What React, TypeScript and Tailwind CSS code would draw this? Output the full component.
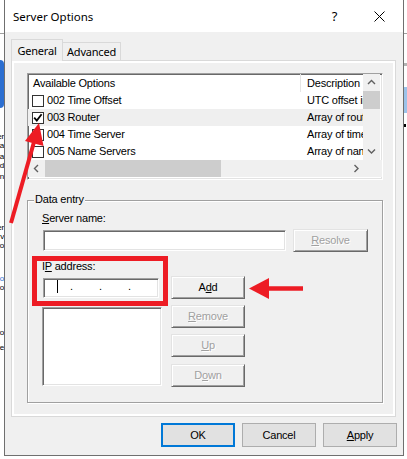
import React from "react";

const sunken =
  "border border-t-[#a0a0a0] border-l-[#a0a0a0] border-b-white border-r-white shadow-[inset_1px_1px_0_#696969,inset_-1px_-1px_0_#e3e3e3]";
const raised =
  "border border-t-[#e3e3e3] border-l-[#e3e3e3] border-b-[#696969] border-r-[#696969] shadow-[inset_1px_1px_0_#ffffff,inset_-1px_-1px_0_#a0a0a0] bg-[#f0f0f0]";

function Chevron({ dir }: { dir: "up" | "down" | "left" | "right" }) {
  const d =
    dir === "up"
      ? "M1 5 L4.5 1.5 L8 5"
      : dir === "down"
      ? "M1 1.5 L4.5 5 L8 1.5"
      : dir === "left"
      ? "M5 1 L1.5 4.5 L5 8"
      : "M1.5 1 L5 4.5 L1.5 8";
  const horiz = dir === "up" || dir === "down";
  return (
    <svg width={horiz ? 9 : 7} height={horiz ? 7 : 9} viewBox={horiz ? "0 0 9 7" : "0 0 7 9"}>
      <path d={d} stroke="#606060" strokeWidth="1.4" fill="none" />
    </svg>
  );
}

function Check({ checked }: { checked?: boolean }) {
  return (
    <div className="w-[12px] h-[12px] border border-[#333333] bg-white shrink-0 flex items-center justify-center">
      {checked && (
        <svg width="10" height="10" viewBox="0 0 10 10">
          <path d="M1.2 4.6 L3.8 7.6 L8.6 1.2" stroke="#000" strokeWidth="1.8" fill="none" />
        </svg>
      )}
    </div>
  );
}

const rows = [
  { name: "002 Time Offset", desc: "UTC offset in seconds", checked: false, hi: false },
  { name: "003 Router", desc: "Array of router addresses", checked: true, hi: true },
  { name: "004 Time Server", desc: "Array of time server addresses", checked: false, hi: false },
  { name: "005 Name Servers", desc: "Array of name servers", checked: false, hi: false },
];

function ClassicButton({ children, disabled, w = "w-[74px]", extra = "" }: { children: React.ReactNode; disabled?: boolean; w?: string; extra?: string }) {
  return (
    <div
      className={`${w} h-[23px] ${raised} flex items-center justify-center ${
        disabled ? "text-[#a0a0a0] [text-shadow:1px_1px_0_#ffffff]" : "text-black"
      } ${extra}`}
    >
      {children}
    </div>
  );
}

function StripLine({ t, c = "text-black", mt = "" }: { t: string; c?: string; mt?: string }) {
  return (
    <div className={`h-[9px] shrink-0 ${mt} flex justify-end whitespace-nowrap text-[8px] leading-[9px] ${c}`}>
      <span>{t}</span>
    </div>
  );
}

export default function App() {
  return (
    <div className="w-[407px] h-[459px] bg-white flex overflow-hidden relative font-['Liberation_Sans',Arial,sans-serif] text-[11px] leading-[13px] text-black tracking-[-0.2px]">
      {/* background window, left edge */}
      <div className="w-[4px] h-full shrink-0 flex flex-col overflow-hidden">
        <div className="h-[33px] shrink-0" />
        <div className="h-px bg-[#a0a0a0] shrink-0" />
        <div className="h-[26px] shrink-0" />
        <div className="h-[48px] shrink-0 bg-[#2c6fd1] rounded-r-[4px]" />
        <StripLine t="Server" mt="mt-[24px]" />
        <StripLine t="Data" />
        <StripLine t="Replica" mt="mt-[2px]" />
        <StripLine t="Add" />
        <StripLine t="Domain" mt="mt-[2px]" />
        <StripLine t="Server" mt="mt-[42px]" />
        <StripLine t="Serv" />
        <StripLine t="Policyo" />
        <StripLine t="o" c="text-[#2c6fd1]" mt="mt-[24px]" />
        <StripLine t="o" />
        <StripLine t="Policyo" mt="mt-[36px]" />
        <StripLine t="Store" mt="mt-[6px]" />
      </div>

      {/* dialog */}
      <div className="w-[400px] h-[456px] shrink-0 border-x border-b border-[#6f6f6f] flex flex-col">
        {/* title bar */}
        <div className="h-[32px] shrink-0 bg-white flex items-center pl-[8px]">
          <span className="font-['Noto_Sans',sans-serif] text-[11.5px] tracking-normal">Server Options</span>
          <div className="flex-1" />
          <div className="w-[45px] flex justify-center font-['Noto_Sans',sans-serif] text-[13px] tracking-normal">?</div>
          <div className="w-[45px] mr-[1px] flex justify-center">
            <svg width="11" height="11" viewBox="0 0 11 11">
              <path d="M0.5 0.5 L10.5 10.5 M10.5 0.5 L0.5 10.5" stroke="#000" strokeWidth="1" />
            </svg>
          </div>
        </div>

        {/* body */}
        <div className="flex-1 bg-[#f0f0f0] flex flex-col pl-[6px] pr-[6px]">
          {/* tabs */}
          <div className="mt-[7px] h-[21px] shrink-0 flex items-start relative z-10 font-['Noto_Sans',sans-serif] text-[11px] tracking-[-0.2px]">
            <div className="w-[52px] h-[22px] bg-[#f0f0f0] border-t border-l border-r border-[#d9d9d9] flex items-center justify-center pb-[1px]">
              General
            </div>
            <div className="w-[58px] h-[18px] mt-[3px] bg-[#f0f0f0] border-t border-r border-[#d9d9d9] flex items-center justify-center">
              Advanced
            </div>
          </div>

          {/* tab panel */}
          <div className="w-[385px] h-[357px] shrink-0 border border-[#d9d9d9] bg-white p-[2px]">
            <div className="w-full h-full bg-[#f0f0f0] pl-[13px] pt-[10px] flex flex-col">
              {/* list view */}
              <div className={`w-[356px] h-[107px] shrink-0 ${sunken} bg-white flex flex-col overflow-hidden`}>
                <div className="h-[86px] flex">
                  <div className="w-[335px] flex flex-col">
                    <div className="h-[18px] flex items-center">
                      <div className="w-[272px] pl-[5px]">Available Options</div>
                      <div className="flex-1 h-full border-l border-[#e5e5e5] pl-[6px] flex items-center whitespace-nowrap overflow-hidden">
                        Description
                      </div>
                    </div>
                    {rows.map((r) => (
                      <div key={r.name} className={`h-[17px] flex items-center ${r.hi ? "bg-[#efefef]" : ""}`}>
                        <div className="w-[273px] pl-[4px] flex items-center">
                          <Check checked={r.checked} />
                          <span className="ml-[3px] whitespace-nowrap">{r.name}</span>
                        </div>
                        <div className="flex-1 pl-[6px] whitespace-nowrap overflow-hidden">{r.desc}</div>
                      </div>
                    ))}
                  </div>
                  {/* vertical scrollbar */}
                  <div className="w-[17px] bg-[#f0f0f0] flex flex-col">
                    <div className="h-[17px] flex items-center justify-center">
                      <Chevron dir="up" />
                    </div>
                    <div className="h-[18px] bg-[#cdcdcd]" />
                    <div className="flex-1" />
                    <div className="h-[17px] flex items-center justify-center">
                      <Chevron dir="down" />
                    </div>
                  </div>
                </div>
                {/* horizontal scrollbar */}
                <div className="h-[17px] flex bg-[#f0f0f0]">
                  <div className="w-[17px] flex items-center justify-center">
                    <Chevron dir="left" />
                  </div>
                  <div className="w-[176px] bg-[#cdcdcd]" />
                  <div className="flex-1" />
                  <div className="w-[17px] flex items-center justify-center">
                    <Chevron dir="right" />
                  </div>
                  <div className="w-[17px] bg-[#f0f0f0]" />
                </div>
              </div>

              {/* group box */}
              <div className="mt-[20px] w-[356px] h-[203px] shrink-0 relative border border-[#a0a0a0] shadow-[inset_1px_1px_0_#ffffff,1px_1px_0_#ffffff] pl-[14px] pt-[11px] flex flex-col">
                <div className="absolute left-[6px] top-[-8px] px-[1px] bg-[#f0f0f0]">Data entry</div>
                <div>
                  <span className="underline underline-offset-[1px]">S</span>erver name:
                </div>
                <div className="mt-[4px] h-[23px] flex items-center">
                  <div className={`ml-[1px] w-[243px] h-[21px] ${sunken} bg-white`} />
                  <ClassicButton disabled w="w-[75px]" extra="ml-[7px]">
                    <span>
                      <span className="underline underline-offset-[1px]">R</span>esolve
                    </span>
                  </ClassicButton>
                </div>
                <div className="mt-[8px] flex">
                  <div className="w-[120px] flex flex-col">
                    <div>
                      I<span className="underline underline-offset-[1px]">P</span> address:
                    </div>
                    <div className={`mt-[5px] ml-[1px] w-[116px] h-[20px] ${sunken} bg-white flex items-start pt-[1px] pl-[13px]`}>
                      <div className="w-px h-[13px] bg-black" />
                      <div className="ml-[12px] w-[29px]">.</div>
                      <div className="w-[29px]">.</div>
                      <div className="w-[29px]">.</div>
                    </div>
                    <div className={`mt-[9px] w-[120px] h-[79px] ${sunken} bg-white`} />
                  </div>
                  <div className="ml-[9px] mt-[16px] flex flex-col">
                    <ClassicButton>
                      <span>
                        A<span className="underline underline-offset-[1px]">d</span>d
                      </span>
                    </ClassicButton>
                    <ClassicButton disabled extra="mt-[6px]">
                      <span>
                        <span className="underline underline-offset-[1px]">R</span>emove
                      </span>
                    </ClassicButton>
                    <ClassicButton disabled extra="mt-[6px]">
                      <span>
                        <span className="underline underline-offset-[1px]">U</span>p
                      </span>
                    </ClassicButton>
                    <ClassicButton disabled extra="mt-[7px]">
                      <span>
                        D<span className="underline underline-offset-[1px]">o</span>wn
                      </span>
                    </ClassicButton>
                  </div>
                </div>
              </div>
            </div>
          </div>

          {/* dialog buttons */}
          <div className="mt-[6px] flex justify-end gap-[7px]">
            <div className="w-[74px] h-[24px] bg-[#e1e1e1] border-2 border-[#0078d7] flex items-center justify-center">OK</div>
            <div className="w-[74px] h-[24px] bg-[#e1e1e1] border border-[#adadad] flex items-center justify-center">Cancel</div>
            <div className="w-[74px] h-[24px] bg-[#e1e1e1] border border-[#adadad] flex items-center justify-center">
              <span>
                <span className="underline underline-offset-[1px]">A</span>pply
              </span>
            </div>
          </div>
        </div>
      </div>

      {/* background window, right edge */}
      <div className="w-[3px] h-full shrink-0 flex flex-col overflow-hidden">
        <div className="h-[33px] shrink-0" />
        <div className="h-px bg-[#a0a0a0] shrink-0" />
        <div className="h-[29px] shrink-0" />
        <div className="h-[3px] bg-[#b4b4b4] shrink-0" />
        <div className="h-[21px] shrink-0" />
        <div className="h-[26px] bg-[#9cc3ea] shrink-0" />
        <div className="h-[11px] shrink-0" />
        <div className="h-[3px] w-[2px] bg-black shrink-0" />
      </div>

      {/* annotations */}
      <div className="absolute left-[32px] top-[256px] w-[136px] h-[50px] border-[5px] border-[#ed1c24] pointer-events-none" />
      <svg className="absolute left-0 top-0 pointer-events-none" width="407" height="459" viewBox="0 0 407 459">
        <line x1="11" y1="223" x2="34" y2="142" stroke="#ed1c24" strokeWidth="4" />
        <polygon points="39,123 43.5,146 25,141" fill="#ed1c24" />
        <line x1="303" y1="288.5" x2="266" y2="288.5" stroke="#ed1c24" strokeWidth="4.5" />
        <polygon points="249,288.5 269,278 269,299" fill="#ed1c24" />
      </svg>
    </div>
  );
}
